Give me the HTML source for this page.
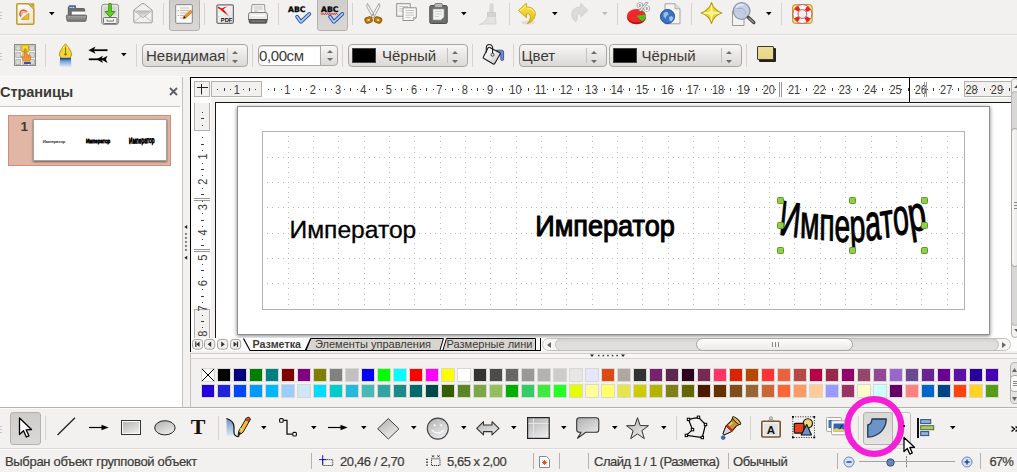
<!DOCTYPE html><html lang="ru"><head><meta charset="utf-8"><title>Draw</title><style>
*{box-sizing:border-box;margin:0;padding:0}
html,body{width:1017px;height:472px;overflow:hidden;background:#f2f1f0;font-family:"Liberation Sans",sans-serif;color:#3c3b37}
.a{position:absolute}
.t{position:absolute;white-space:nowrap;line-height:1}
.sep{position:absolute;width:1px;background:#d6d3cf}
.cb{position:absolute;border:1px solid #aaa7a2;border-radius:4px;background:linear-gradient(#f8f7f6,#e9e7e5 50%,#dcdad7)}
.pressed{position:absolute;border:1px solid #b4b1ad;border-radius:3px;background:linear-gradient(#cfcdca,#dad8d5)}
svg{position:absolute;overflow:visible}
</style></head><body>
<div class="a" style="left:0px;top:12px;width:2px;height:1px;background:#c8c5c0"></div>
<div class="a" style="left:0px;top:15px;width:2px;height:1px;background:#c8c5c0"></div>
<div class="a" style="left:0px;top:18px;width:2px;height:1px;background:#c8c5c0"></div>
<div class="a" style="left:0px;top:34px;width:1017px;height:1px;background:#dbdad8"></div>
<div class="a" style="left:0px;top:35px;width:1017px;height:1px;background:#fbfaf9"></div>
<div class="a" style="left:0px;top:53px;width:2px;height:1px;background:#c8c5c0"></div>
<div class="a" style="left:0px;top:56px;width:2px;height:1px;background:#c8c5c0"></div>
<div class="a" style="left:0px;top:59px;width:2px;height:1px;background:#c8c5c0"></div>
<div class="sep" style="left:163px;top:3px;height:22px;background:#d6d3cf"></div>
<div class="sep" style="left:204px;top:3px;height:22px;background:#d6d3cf"></div>
<div class="sep" style="left:278px;top:3px;height:22px;background:#d6d3cf"></div>
<div class="sep" style="left:352px;top:3px;height:22px;background:#d6d3cf"></div>
<div class="sep" style="left:509px;top:3px;height:22px;background:#d6d3cf"></div>
<div class="sep" style="left:617px;top:3px;height:22px;background:#d6d3cf"></div>
<div class="sep" style="left:691px;top:3px;height:22px;background:#d6d3cf"></div>
<div class="sep" style="left:781px;top:3px;height:22px;background:#d6d3cf"></div>
<div class="pressed" style="left:169px;top:-2px;width:31px;height:33px"></div>
<div class="pressed" style="left:317px;top:-2px;width:31px;height:33px"></div>
<svg style="left:16px;top:2.5px" width="19" height="22" viewBox="0 0 19 22">
<defs><linearGradient id="nd" x1="0" y1="0" x2="1" y2="1"><stop offset="0" stop-color="#ffffff"/><stop offset="1" stop-color="#e4e3e0"/></linearGradient></defs>
<path d="M0.800 1.800q0-1 1-1h10.800l5.200 5.200v14.200q0 1-1 1H1.800q-1 0-1-1z" fill="url(#nd)" stroke="#c19d1e" stroke-width="1.500" stroke-linejoin="round"/>
<path d="M13.300 0.300h5v5z" fill="#c9a21a"/>
<path d="M5.200 13.500A3.600 3.600 0 1 1 10.800 9.200" fill="none" stroke="#d9663a" stroke-width="1.700"/>
<path d="M6.300 12.200A2 2 0 0 1 9.500 9.800" fill="none" stroke="#eda27e" stroke-width="1.200"/>
<path d="M12.800 10.300v6H5.300z" fill="#f0c419" stroke="#c89a10" stroke-width=".9" stroke-linejoin="round"/>
</svg>
<svg style="left:48.8px;top:11.9px" width="6" height="4" viewBox="0 0 6 4"><path d="M0 0h5.600l-2.800 3.300z" fill="#000"/></svg>
<svg style="left:66px;top:5px" width="21" height="17" viewBox="0 0 21 17">
<defs><linearGradient id="ff" x1="0" y1="0" x2="0" y2="1"><stop offset="0" stop-color="#a4a6a4"/><stop offset="1" stop-color="#747674"/></linearGradient></defs>
<path d="M2.300 2h7l1.200 1.600h7.300q.8 0 .8.800v7H2.300z" fill="#6c6e6c" stroke="#555755" stroke-width=".9"/>
<path d="M2.600 0.800q0-.5.500-.5h6.400q.5 0 .5.500v2.600H2.600z" fill="#4a68a8"/>
<rect x="3.600" y="2" width="1" height="1" fill="#fff"/><rect x="5.400" y="2" width="1" height="1" fill="#fff"/><rect x="7.200" y="2" width="1" height="1" fill="#fff"/>
<rect x="5.800" y="6.600" width="13.300" height="3.200" fill="#fdfdfd"/>
<path d="M1 10.200h19q.8 0 .7.800l-.7 4.400q-.1.900-1 .9H2q-.9 0-1-.9L.300 11q-.1-.8.700-.8z" fill="url(#ff)" stroke="#5e605e" stroke-width=".9"/>
</svg>
<svg style="left:100px;top:3px" width="20" height="22" viewBox="0 0 20 22">
<rect x="1.600" y="1.300" width="17" height="20.200" rx="2.500" fill="#e6e6e4" stroke="#8f918e" stroke-width="1"/>
<rect x="3.500" y="3.500" width="13" height="9" fill="#d4d5d2"/>
<rect x="3.500" y="14.500" width="13.500" height="6" rx=".8" fill="#f1f1ef" stroke="#6f716e" stroke-width="1"/>
<path d="M7 16.500v1.600h6.500v-1.600" fill="none" stroke="#6f716e" stroke-width=".9"/>
<path d="M8.700 0.800q1.300-1 2.600 0v7.700h3.700L10 14.300 5 8.500h3.700z" fill="#5cd11e" stroke="#3a9a0e" stroke-width="1" stroke-linejoin="round"/>
</svg>
<svg style="left:133px;top:2.5px" width="21" height="21" viewBox="0 0 21 21">
<defs><linearGradient id="mf" x1="0" y1="0" x2="0" y2="1"><stop offset="0" stop-color="#b4b4b2"/><stop offset="1" stop-color="#e2e2e0"/></linearGradient></defs>
<path d="M0.800 7.200L8.500 1q1.500-1 3 0l7.700 6.200V19q0 .8-.8.800H1.600q-.8 0-.8-.8z" fill="#f0f0ee" stroke="#9c9c9a" stroke-width="1" stroke-linejoin="round"/>
<path d="M2.200 7.400h15.600L10 13.800z" fill="url(#mf)"/>
<path d="M1.200 19l7-6M18.800 19l-7-6" stroke="#b9b9b7" stroke-width=".9" fill="none"/>
<path d="M1 7.500l9 7.200 9-7.200" stroke="#a8a8a6" stroke-width=".9" fill="none"/>
</svg>
<svg style="left:175px;top:4px" width="18" height="20" viewBox="0 0 18 20">
<rect x="0.700" y="0.700" width="16.600" height="18.600" rx=".8" fill="#fbfbfa" stroke="#858482" stroke-width="1"/>
<path d="M5 4h9M5 6.500h9M5 9h6M5 11.500h4M5 14h3" stroke="#b4b3b0" stroke-width=".9"/>
<path d="M2.800 6.500h1M2.800 11.500h1" stroke="#888" stroke-width="1"/>
<path d="M8.300 14.600l.8-2.600 6.500-5.800 1.700 1.900-6.500 5.800z" fill="#f5921e" stroke="#c0640a" stroke-width=".7" stroke-linejoin="round"/>
<path d="M11 8.800l4-3.600" stroke="#ffd28a" stroke-width=".8"/>
<path d="M8.300 14.600l.8-2.600 1.700 1.900z" fill="#111"/>
</svg>
<svg style="left:216px;top:4px" width="18" height="20" viewBox="0 0 18 20">
<defs><linearGradient id="pg" x1="0" y1="0" x2="1" y2="1"><stop offset="0" stop-color="#fff"/><stop offset="1" stop-color="#dcdcdc"/></linearGradient>
<linearGradient id="pr" x1="0" y1="0" x2="1" y2="1"><stop offset="0" stop-color="#e01018"/><stop offset=".55" stop-color="#e01018"/><stop offset="1" stop-color="#e01018" stop-opacity="0"/></linearGradient></defs>
<rect x="0.900" y="0.900" width="16.500" height="18.400" rx="1.200" fill="url(#pg)" stroke="#6f6f6d" stroke-width="1.200"/>
<path d="M1.800 2.600C5 3.500 10 7 13.800 13.200 9 10 5 5.500 1.800 4z" fill="url(#pr)"/>
<path d="M5.500 4.800Q8 2.800 11.500 2.600 8.500 3.800 7 6z" fill="#e01018"/>
<path d="M3 7.300v.8M3 12.300v.8" stroke="#999" stroke-width=".8"/>
<text x="10.600" y="18" font-size="5.400" font-weight="bold" text-anchor="middle" fill="#111" font-family="Liberation Sans, sans-serif" textLength="11.500" lengthAdjust="spacingAndGlyphs">PDF</text>
</svg>
<svg style="left:248px;top:4px" width="20" height="20" viewBox="0 0 20 20">
<path d="M4 0.600h12.500l.8 9H3.200z" fill="#f3f3f2" stroke="#9a9996" stroke-width="1"/>
<path d="M6 3h8.500M6 5h8.500M6 7h4" stroke="#c2c1be" stroke-width=".9"/>
<path d="M2.500 8.500h15q2 0 2 2v5.500h-19v-5.500q0-2 2-2z" fill="#e9e9e7" stroke="#7d7d7a" stroke-width="1"/>
<path d="M3 11.500h14" stroke="#fff" stroke-width="1.600"/>
<path d="M1.200 15.500h17.600v2.500q0 1.200-1.200 1.200H2.400q-1.200 0-1.200-1.200z" fill="#5a5a58" stroke="#4a4a48" stroke-width=".8"/>
<path d="M3 17.200h14" stroke="#8a8a88" stroke-width="1"/>
</svg>
<svg style="left:288px;top:5px" width="23" height="20" viewBox="0 0 23 20"><text x="0" y="6.800" font-size="7.700" font-weight="bold" fill="#000" stroke="#000" stroke-width=".3" font-family="DejaVu Sans, Liberation Sans, sans-serif" textLength="17.300" lengthAdjust="spacingAndGlyphs">ABC</text><path d="M9 11.700l3.900 5.200 8.500-8" stroke="#2552a8" stroke-width="3.600" fill="none" stroke-linecap="round" stroke-linejoin="round"/><path d="M9 11.700l3.900 5.200 8.500-8" stroke="#b4cff2" stroke-width="1.700" fill="none" stroke-linecap="round" stroke-linejoin="round"/></svg>
<svg style="left:321px;top:5px" width="23" height="20" viewBox="0 0 23 20"><text x="0" y="6.800" font-size="7.700" font-weight="bold" fill="#000" stroke="#000" stroke-width=".3" font-family="DejaVu Sans, Liberation Sans, sans-serif" textLength="17.300" lengthAdjust="spacingAndGlyphs">ABC</text><path d="M0 8.300l1.100 1.300 1.100-1.300 1.100 1.300 1.100-1.300 1.100 1.300 1.100-1.300 1.100 1.300 1.100-1.300 1.100 1.300 1.100-1.300 1.100 1.300 1.100-1.300 1.100 1.300 1.100-1.300 1.100 1.300" stroke="#e01010" stroke-width="1" fill="none"/><path d="M9 11.700l3.900 5.200 8.500-8" stroke="#2552a8" stroke-width="3.600" fill="none" stroke-linecap="round" stroke-linejoin="round"/><path d="M9 11.700l3.900 5.200 8.500-8" stroke="#b4cff2" stroke-width="1.700" fill="none" stroke-linecap="round" stroke-linejoin="round"/></svg>
<svg style="left:364px;top:3px" width="19" height="21" viewBox="0 0 19 21">
<path d="M3.500 0.500q-1.300 1.500-.3 4L9 15l2-1.500z" fill="#f4f4f2" stroke="#9a9a98" stroke-width=".9" stroke-linejoin="round"/>
<path d="M15 0.500q1.300 1.500.3 4L9.500 15l-2-1.500z" fill="#f4f4f2" stroke="#9a9a98" stroke-width=".9" stroke-linejoin="round"/>
<circle cx="9.200" cy="11.800" r=".9" fill="#888"/>
<rect x="-3.600" y="-2.900" width="7.200" height="5.800" rx="2.400" fill="#c77c0c" stroke="#8f5600" stroke-width="1" transform="translate(4.600,17) rotate(-20)"/>
<rect x="-3.600" y="-2.900" width="7.200" height="5.800" rx="2.400" fill="#c77c0c" stroke="#8f5600" stroke-width="1" transform="translate(14,17) rotate(20)"/>
<ellipse cx="4.600" cy="17" rx="1.400" ry="1" fill="#f0d9b0" transform="rotate(-20 4.600 17)"/>
<ellipse cx="14" cy="17" rx="1.400" ry="1" fill="#f0d9b0" transform="rotate(20 14 17)"/>
</svg>
<svg style="left:396px;top:3px" width="21" height="18" viewBox="0 0 21 18">
<rect x="0.700" y="0.700" width="13.500" height="12.500" fill="#f5f5f4" stroke="#8e8e8c" stroke-width="1"/>
<path d="M3 3.500h9M3 5.800h9M3 8.100h4" stroke="#bcbbb8" stroke-width=".8"/>
<path d="M7 4.800h13.300v9.700l-3 3H7z" fill="#fbfbfa" stroke="#8e8e8c" stroke-width="1"/>
<path d="M9.500 7.500h8.500M9.500 9.800h8.500M9.500 12.100h8.500M9.500 14.400h5" stroke="#b4b3b0" stroke-width=".8"/>
<path d="M17.300 17.500v-3h3" fill="#ddd" stroke="#8e8e8c" stroke-width=".7"/>
</svg>
<svg style="left:429px;top:3px" width="19" height="21" viewBox="0 0 19 21">
<rect x="0.800" y="2.500" width="17.400" height="18" rx="1.500" fill="#6d6f6c" stroke="#4b4d4a" stroke-width="1"/>
<rect x="5.500" y="0.500" width="8" height="4" rx="1.500" fill="#b9b9b6" stroke="#6d6f6c" stroke-width=".8"/>
<path d="M4 6h11v8l-3 3H4z" fill="#f5f5f4" stroke="#999" stroke-width=".6"/>
<path d="M6 8.500h7M6 11h7M6 13.500h4" stroke="#c5c4c1" stroke-width=".8"/>
</svg>
<svg style="left:460.5px;top:11.8px" width="6" height="4" viewBox="0 0 6 4"><path d="M0 0h5.600l-2.800 3.300z" fill="#000"/></svg>
<svg style="left:479px;top:3px" width="20" height="22" viewBox="0 0 20 22">
<path d="M11 1.500q1.500-2 3 0v8h-3z" fill="#dcdbd8" stroke="#cfcecb" stroke-width=".8"/>
<path d="M8.500 9.500h8v4h-8z" fill="#d4d3d0" stroke="#c9c8c5" stroke-width=".8"/>
<path d="M8.500 13.500h8l.5 7.500H6.500c-2 0-4.500.5-6 .5 4-1.500 7-4 8-8z" fill="#e4e3e0" stroke="#d0cfcc" stroke-width=".8"/>
</svg>
<svg style="left:518px;top:3px" width="19" height="22" viewBox="0 0 19 22">
<defs><linearGradient id="ug" x1="0" y1="0" x2="0" y2="1"><stop offset="0" stop-color="#fbe54a"/><stop offset="1" stop-color="#e4bc10"/></linearGradient></defs>
<ellipse cx="10" cy="19.500" rx="7" ry="2" fill="#000" opacity=".08"/>
<path d="M8.400 0.300L0.400 7.400L8.400 14.700V10.800C11 10.500 13.500 12 12 16C11.300 18 10.500 19.500 9.300 20.700C14 19 17.500 15 17.200 10.300C16.800 6 13 4 8.400 4z" fill="url(#ug)" stroke="#c4a000" stroke-width=".9" stroke-linejoin="round"/>
<path d="M8 2.500L2.300 7.400M9 5.200c4 0 7 2 7.200 5.500" fill="none" stroke="#fff7a8" stroke-width=".9"/>
</svg>
<svg style="left:551.6px;top:11.9px" width="6" height="4" viewBox="0 0 6 4"><path d="M0 0h5.600l-2.800 3.300z" fill="#000"/></svg>
<svg style="left:571px;top:3px" width="18" height="20" viewBox="0 0 18 20">
<path d="M9.800 0.500L16.900 7.400L9.800 13.800V10.300C7.500 10 5.500 11.500 6.200 14.500C6.500 16 5.800 17.500 4.900 18.700C2 16.500 0.600 13.500 0.900 10.300C1.300 6.300 5 4 9.800 4z" fill="#dcdbd8" stroke="#cecdca" stroke-width=".9" stroke-linejoin="round"/>
</svg>
<svg style="left:601.8px;top:11.9px" width="6" height="4" viewBox="0 0 6 4"><path d="M0 0h5.600l-2.800 3.300z" fill="#bdbbb8"/></svg>
<svg style="left:626px;top:2px" width="24" height="23" viewBox="0 0 24 23">
<ellipse cx="10.500" cy="15.500" rx="9.500" ry="6.800" fill="#b70c0c"/>
<ellipse cx="10.500" cy="13.800" rx="9.500" ry="6.800" fill="#ef2929"/>
<path d="M10.500 13.800l9.300-1.200c.5 3-1 5.500-3.500 7z" fill="#46c21a"/>
<text x="11" y="8.800" font-size="10.500" font-weight="bold" fill="#fdfdfd" stroke="#6e6e6c" stroke-width=".9" paint-order="stroke" font-family="Liberation Sans, sans-serif" textLength="12.500" lengthAdjust="spacingAndGlyphs">%</text>
</svg>
<svg style="left:660px;top:3px" width="21" height="22" viewBox="0 0 21 22">
<path d="M5 0.800h10l5 5v15H5z" fill="#f3f3f2" stroke="#a4a3a0" stroke-width="1"/>
<path d="M15 0.800v5h5" fill="#ddd" stroke="#a4a3a0" stroke-width=".8"/>
<circle cx="7.500" cy="13.500" r="7" fill="#3b73c4" stroke="#1f4b8f" stroke-width="1"/>
<path d="M3.500 10.500q2-2.500 4-1.500l1 2.500-2 1.500-1 2.500-2-2zM9 14l3-1 1.500 2-2 3.500-2-1z" fill="#9cc0ee"/>
</svg>
<svg style="left:700px;top:2px" width="23" height="22" viewBox="0 0 23 22">
<path d="M11.500 0.600c1.300 5 4 8 10.300 10.400 -6.300 2-9 5-10.300 10.400 -1.300-5.400-4-8.400-10.300-10.400 6.300-2.400 9-5.400 10.300-10.400z" fill="#f4dc3c" stroke="#b89a00" stroke-width="1.200" stroke-linejoin="round"/>
<path d="M11.500 3.500v15M4 11h15" stroke="#fff9c0" stroke-width="1.300" stroke-linecap="round"/>
<path d="M11.500 6.500c.5 2 1.800 3.500 4 4.500 -2.200.8-3.500 2.200-4 4.500 -.5-2.300-1.800-3.700-4-4.500 2.200-1 3.500-2.500 4-4.500z" fill="#fdf4a0"/>
</svg>
<svg style="left:732px;top:1.5px" width="25" height="24" viewBox="0 0 25 24">
<path d="M0.500 9h8l3.500 3.500V23.500H0.500z" fill="#f3f3f2" stroke="#9c9b98" stroke-width="1"/>
<circle cx="9.600" cy="9" r="8.300" fill="#bccbe0" fill-opacity=".88" stroke="#8d96a2" stroke-width="1.300"/>
<path d="M4.500 6.500h6l3 3v3" fill="none" stroke="#9fb0c8" stroke-width="1"/>
<path d="M4 5.500q3-3.500 7.500-2.500" stroke="#eef3fa" stroke-width="1.300" fill="none"/>
<path d="M16.200 15.300l5.600 5.200" stroke="#4a4a48" stroke-width="3.400" stroke-linecap="round"/>
<path d="M16.800 15.900l4.600 4.300" stroke="#a5a5a3" stroke-width="1.100" stroke-linecap="round" stroke-dasharray="1 1"/>
</svg>
<svg style="left:765.8px;top:11.9px" width="6" height="4" viewBox="0 0 6 4"><path d="M0 0h5.600l-2.800 3.300z" fill="#000"/></svg>
<svg style="left:792px;top:4px" width="21" height="20" viewBox="0 0 21 20">
<rect x="0.600" y="0.600" width="19.600" height="18.800" rx="3.500" fill="#f6e9b0" stroke="#c9a227" stroke-width="1.200"/>
<circle cx="10.400" cy="10" r="9.500" fill="#fafafa" stroke="#b84a4a" stroke-width=".8"/>
<circle cx="10.400" cy="10" r="7" fill="none" stroke="#ee2222" stroke-width="4.600" stroke-dasharray="4 7" stroke-dashoffset="-3.500"/>
<circle cx="10.400" cy="10" r="4.400" fill="#f2f1f0" stroke="#b84a4a" stroke-width=".9"/>
</svg>
<div class="sep" style="left:45px;top:44px;height:23px;background:#d6d3cf"></div>
<div class="sep" style="left:136px;top:44px;height:23px;background:#d6d3cf"></div>
<div class="sep" style="left:252px;top:44px;height:23px;background:#d6d3cf"></div>
<div class="sep" style="left:342px;top:44px;height:23px;background:#d6d3cf"></div>
<div class="sep" style="left:472px;top:44px;height:23px;background:#d6d3cf"></div>
<div class="sep" style="left:513px;top:44px;height:23px;background:#d6d3cf"></div>
<div class="sep" style="left:746px;top:44px;height:23px;background:#d6d3cf"></div>
<svg style="left:14px;top:44px" width="22" height="22" viewBox="0 0 22 22">
<rect x="0.500" y="0.500" width="21" height="21" fill="#f7f7f6" stroke="#8a8a87" stroke-width="1"/>
<rect x="1.8" y="1.8" width="4.800" height="4.800" fill="#d6d9d2" stroke="#a6a8a3" stroke-width=".8"/><rect x="8.7" y="1.8" width="4.800" height="4.800" fill="#d6d9d2" stroke="#a6a8a3" stroke-width=".8"/><rect x="15.6" y="1.8" width="4.800" height="4.800" fill="#d6d9d2" stroke="#a6a8a3" stroke-width=".8"/><rect x="1.8" y="8.7" width="4.800" height="4.800" fill="#d6d9d2" stroke="#a6a8a3" stroke-width=".8"/><rect x="8.7" y="8.7" width="4.800" height="4.800" fill="#d6d9d2" stroke="#a6a8a3" stroke-width=".8"/><rect x="15.6" y="8.7" width="4.800" height="4.800" fill="#d6d9d2" stroke="#a6a8a3" stroke-width=".8"/><rect x="1.8" y="15.6" width="4.800" height="4.800" fill="#d6d9d2" stroke="#a6a8a3" stroke-width=".8"/><rect x="8.7" y="15.6" width="4.800" height="4.800" fill="#d6d9d2" stroke="#a6a8a3" stroke-width=".8"/><rect x="15.6" y="15.6" width="4.800" height="4.800" fill="#d6d9d2" stroke="#a6a8a3" stroke-width=".8"/>
<rect x="7.800" y="1" width="6.600" height="6.600" fill="#f7dc2a" stroke="#c9a400" stroke-width="1"/>
<path d="M10.300 5.200q1-1 1.800 0v5.300l3.800.8q1 .3.900 1.400l-.5 3.300q-.2 1-1.200 1h-4.600q-.8 0-1.200-.7l-1.800-3.300q-.3-1.200 1-.8l1.800 1.300z" fill="#f59a35" stroke="#d2741a" stroke-width=".8" stroke-linejoin="round"/>
<path d="M12.800 11.500v3M14.500 11.800v2.700" stroke="#d2741a" stroke-width=".6"/>
<rect x="10" y="18" width="6.800" height="2" fill="#2f55a4"/>
</svg>
<svg style="left:58px;top:43px" width="15" height="24" viewBox="0 0 15 24">
<defs><linearGradient id="ph" x1="0" y1="0" x2="0" y2="1"><stop offset="0" stop-color="#2f5ea6"/><stop offset=".35" stop-color="#7fa3d8"/><stop offset="1" stop-color="#e6edf7"/></linearGradient></defs>
<path d="M7.500 0.800C5.800 2.500 1.300 8.500 1.300 12L3.500 15.500h8l2.200-3.500C13.700 8.500 9.200 2.500 7.500 0.800z" fill="#f3d437" stroke="#b89600" stroke-width="1"/>
<path d="M5 4.500Q7.500 2.500 10 4.500" stroke="#fff3a0" stroke-width="1" fill="none"/>
<path d="M7.500 3.500v7.500" stroke="#8a7000" stroke-width="1"/><circle cx="7.500" cy="11.300" r="1.200" fill="#8a7000"/>
<path d="M2 15.500h11l.5 8.500h-12z" fill="url(#ph)"/>
<path d="M2 15.500h11" stroke="#1f4a8a" stroke-width="1.400"/>
</svg>
<svg style="left:88px;top:46px" width="20" height="18" viewBox="0 0 20 18">
<path d="M19.500 4.200H5" stroke="#000" stroke-width="1.800"/><path d="M0.500 4.200l7-3.600-1.800 3.600 1.800 3.600z" fill="#000"/>
<path d="M0.800 13.300H17" stroke="#000" stroke-width="1.800"/><path d="M8.500 13.300l6.500-3.600-1.600 3.600 1.600 3.600zM13 13.300l6.500-3.600-1.600 3.600 1.600 3.600z" fill="#000"/>
</svg>
<svg style="left:120.7px;top:52.7px" width="6" height="4" viewBox="0 0 6 4"><path d="M0 0h5.600l-2.800 3.300z" fill="#000"/></svg>
<div class="cb" style="left:142px;top:44px;width:106px;height:23px"></div>
<div class="t" style="left:146px;top:47.5px;font-size:15px;color:#3c3b37">Невидимая</div>
<div class="sep" style="left:227px;top:48px;height:15px;background:#c4c1bc"></div>
<svg style="left:231.5px;top:50.7px" width="6" height="12.2" viewBox="0 0 6 12.2"><path d="M0 3.100l3-3.100 3 3.100zM0 9.100l3 3.100 3-3.100z" fill="#6e6d68"/></svg>
<div class="a" style="left:258px;top:45px;width:63px;height:21px;background:#fff;border:1px solid #aaa7a2;border-radius:4px 0 0 4px;box-shadow:inset 0 1px 1px #dcdad7"></div>
<div class="t" style="left:259px;top:47.5px;font-size:15px;letter-spacing:-0.4px">0,00см</div>
<div class="cb" style="left:320px;top:45px;width:18px;height:21px;border-radius:0 4px 4px 0"></div>
<svg style="left:326.5px;top:50.2px" width="6" height="11" viewBox="0 0 6 11"><path d="M0 3.100l3-3.100 3 3.100zM0 7.900l3 3.100 3-3.100z" fill="#6e6d68"/></svg>
<div class="cb" style="left:348px;top:44px;width:120px;height:23px"></div>
<div class="a" style="left:352px;top:48px;width:24px;height:15px;background:#000;border:1px solid #444"></div>
<div class="t" style="left:382px;top:47.5px;font-size:15px;color:#3c3b37">Чёрный</div>
<div class="sep" style="left:447px;top:48px;height:15px;background:#c4c1bc"></div>
<svg style="left:451.5px;top:50.7px" width="6" height="12.2" viewBox="0 0 6 12.2"><path d="M0 3.100l3-3.100 3 3.100zM0 9.100l3 3.100 3-3.100z" fill="#6e6d68"/></svg>
<svg style="left:482px;top:43px" width="23" height="23" viewBox="0 0 23 23">
<defs><linearGradient id="bk" x1="0" y1="0" x2="1" y2="1"><stop offset="0" stop-color="#ffffff"/><stop offset=".5" stop-color="#ececec"/><stop offset="1" stop-color="#bdbdbd"/></linearGradient></defs>
<path d="M14.500 7.200h5.300q1.800 0 1.800 1.800v7.300q0 1.200-1.400 1.200t-1.400-1.200V10.200H14.500z" fill="#6d90d0" stroke="#2f4f9a" stroke-width=".9"/>
<path d="M6.300 4.600q.7-.6 1.500-.2L17.800 9.700q.9.500.4 1.400L12.600 20.700q-.5.800-1.400.3L1.600 15.300q-.8-.5-.3-1.300z" fill="url(#bk)" stroke="#1c1c1c" stroke-width="1.100" stroke-linejoin="round"/>
<path d="M4.300 9.500V4.800q0-3.300 3-3.300t3.300 3.300v6.500" fill="none" stroke="#1c1c1c" stroke-width="1.100"/>
<circle cx="10.500" cy="11.800" r="1.500" fill="#e8e8e8" stroke="#333" stroke-width=".9"/>
</svg>
<div class="cb" style="left:519px;top:44px;width:88px;height:23px"></div>
<div class="t" style="left:521.5px;top:47.5px;font-size:15px;color:#3c3b37">Цвет</div>
<div class="sep" style="left:586px;top:48px;height:15px;background:#c4c1bc"></div>
<svg style="left:590.5px;top:50.7px" width="6" height="12.2" viewBox="0 0 6 12.2"><path d="M0 3.100l3-3.100 3 3.100zM0 9.100l3 3.100 3-3.100z" fill="#6e6d68"/></svg>
<div class="cb" style="left:609px;top:44px;width:133px;height:23px"></div>
<div class="a" style="left:613px;top:48px;width:24px;height:15px;background:#000;border:1px solid #444"></div>
<div class="t" style="left:641.5px;top:47.5px;font-size:15px;color:#3c3b37">Чёрный</div>
<div class="sep" style="left:721px;top:48px;height:15px;background:#c4c1bc"></div>
<svg style="left:725.5px;top:50.7px" width="6" height="12.2" viewBox="0 0 6 12.2"><path d="M0 3.100l3-3.100 3 3.100zM0 9.100l3 3.100 3-3.100z" fill="#6e6d68"/></svg>
<div class="a" style="left:758.5px;top:47.5px;width:17px;height:14px;background:#222;border-radius:1px"></div>
<div class="a" style="left:757px;top:46px;width:17px;height:14px;background:linear-gradient(#efdc96,#e8d388);border:1px solid #3a3a30;border-radius:1px"></div>
<div class="a" style="left:0px;top:76px;width:183px;height:331px;background:#f7f6f5"></div>
<div class="a" style="left:0px;top:76px;width:1017px;height:1px;background:#fbfaf9"></div>
<div class="t" style="left:0px;top:85px;font-size:14.6px;font-weight:bold;color:#3c3b37;letter-spacing:-0.1px">Страницы</div>
<svg style="left:169px;top:87px" width="9" height="9" viewBox="0 0 9 9"><path d="M1 1l7 7M8 1l-7 7" stroke="#5c6066" stroke-width="1.800"/></svg>
<div class="a" style="left:0px;top:106px;width:180px;height:1px;background:#c9c6c2"></div>
<div class="a" style="left:0px;top:107px;width:182px;height:300px;background:#fff"></div>
<div class="a" style="left:182px;top:77px;width:1px;height:330px;background:#c4c1bd"></div>
<div class="a" style="left:8px;top:115px;width:163px;height:51px;background:#e2b6a5;border:1px solid #cf8f77"></div>
<div class="t" style="left:20.5px;top:119.5px;font-size:13.5px;font-weight:bold;color:#3c3b37">1</div>
<div class="a" style="left:33px;top:119px;width:134px;height:42px;background:#fff;border:1px solid #a3a09d;box-shadow:0 1px 2px rgba(0,0,0,.5)"></div>
<svg style="left:0;top:0" width="200" height="200" viewBox="0 0 200 200" font-family="Liberation Sans, sans-serif"><text x="42.700" y="143.300" font-size="4.400" fill="#222" stroke="#444" stroke-width=".15">Император</text><text x="86" y="143.500" font-size="4.700" fill="#000" stroke="#000" stroke-width=".7" transform="translate(0,143.500) scale(1,1.150) translate(0,-143.500)">Император</text><text x="129" y="143.300" font-size="8.500" fill="#000" stroke="#000" stroke-width=".9" textLength="25.500" lengthAdjust="spacingAndGlyphs" transform="rotate(-2 141 141)">Император</text></svg>
<svg style="left:184px;top:224.5px" width="4" height="36" viewBox="0 0 4 36"><path d="M3.200 0v4L0.300 2zM3.200 30.800v4L0.300 32.800z" fill="#222"/><rect x="1.200" y="8.2" width="1.500" height="1.500" fill="#333"/><rect x="1.200" y="12.2" width="1.500" height="1.500" fill="#333"/><rect x="1.200" y="16.2" width="1.500" height="1.500" fill="#333"/><rect x="1.200" y="20.2" width="1.500" height="1.500" fill="#333"/><rect x="1.200" y="24.2" width="1.500" height="1.500" fill="#333"/></svg>
<div class="a" style="left:190px;top:77px;width:827px;height:274px;background:#fdfdfd"></div>
<div class="a" style="left:190px;top:77px;width:827px;height:1px;background:#000"></div>
<div class="a" style="left:190px;top:77px;width:1px;height:275px;background:#000"></div>
<div class="a" style="left:211px;top:98px;width:800px;height:4px;background:#f2f1f0"></div>
<div class="a" style="left:211px;top:98px;width:4px;height:240px;background:#f2f1f0"></div>
<div class="a" style="left:194px;top:81px;width:16px;height:16px;background:#f2f1f0;border:1px solid #b3b1ae"></div>
<svg style="left:194px;top:81px" width="16" height="16" viewBox="0 0 16 16"><path d="M3 6.500h11M7.500 3v10.500" stroke="#222" stroke-width="1"/></svg>
<div class="a" style="left:211px;top:81px;width:800px;height:16px;background:#fff"></div>
<div class="a" style="left:211px;top:81px;width:51px;height:16px;background:#f2f1f0;border:1px solid #b3b1ae"></div>
<div class="a" style="left:964px;top:81px;width:47px;height:16px;background:#f2f1f0;border:1px solid #b3b1ae;border-right:none"></div>
<svg style="left:0;top:81px" width="1011" height="16" viewBox="0 0 1011 16" font-family="Liberation Sans, sans-serif"><text transform="translate(236.7,12.700) scale(.88,1)" font-size="12.500" text-anchor="middle" fill="#3c3b37">1</text><rect x="243" y="8.0" width="1" height="1" fill="#3c3b37"/><rect x="249" y="7.0" width="1" height="3" fill="#3c3b37"/><rect x="255" y="8.0" width="1" height="1" fill="#3c3b37"/><rect x="217" y="8.0" width="1" height="1" fill="#3c3b37"/><rect x="224" y="7.0" width="1" height="3" fill="#3c3b37"/><rect x="230" y="8.0" width="1" height="1" fill="#3c3b37"/><rect x="268" y="8.0" width="1" height="1" fill="#3c3b37"/><rect x="274" y="7.0" width="1" height="3" fill="#3c3b37"/><rect x="281" y="8.0" width="1" height="1" fill="#3c3b37"/><text transform="translate(287.3,12.700) scale(.88,1)" font-size="12.500" text-anchor="middle" fill="#3c3b37">1</text><rect x="293" y="8.0" width="1" height="1" fill="#3c3b37"/><rect x="300" y="7.0" width="1" height="3" fill="#3c3b37"/><rect x="306" y="8.0" width="1" height="1" fill="#3c3b37"/><text transform="translate(312.7,12.700) scale(.88,1)" font-size="12.500" text-anchor="middle" fill="#3c3b37">2</text><rect x="319" y="8.0" width="1" height="1" fill="#3c3b37"/><rect x="325" y="7.0" width="1" height="3" fill="#3c3b37"/><rect x="331" y="8.0" width="1" height="1" fill="#3c3b37"/><text transform="translate(338.0,12.700) scale(.88,1)" font-size="12.500" text-anchor="middle" fill="#3c3b37">3</text><rect x="344" y="8.0" width="1" height="1" fill="#3c3b37"/><rect x="350" y="7.0" width="1" height="3" fill="#3c3b37"/><rect x="357" y="8.0" width="1" height="1" fill="#3c3b37"/><text transform="translate(363.4,12.700) scale(.88,1)" font-size="12.500" text-anchor="middle" fill="#3c3b37">4</text><rect x="369" y="8.0" width="1" height="1" fill="#3c3b37"/><rect x="376" y="7.0" width="1" height="3" fill="#3c3b37"/><rect x="382" y="8.0" width="1" height="1" fill="#3c3b37"/><text transform="translate(388.7,12.700) scale(.88,1)" font-size="12.500" text-anchor="middle" fill="#3c3b37">5</text><rect x="395" y="8.0" width="1" height="1" fill="#3c3b37"/><rect x="401" y="7.0" width="1" height="3" fill="#3c3b37"/><rect x="407" y="8.0" width="1" height="1" fill="#3c3b37"/><text transform="translate(414.0,12.700) scale(.88,1)" font-size="12.500" text-anchor="middle" fill="#3c3b37">6</text><rect x="420" y="8.0" width="1" height="1" fill="#3c3b37"/><rect x="426" y="7.0" width="1" height="3" fill="#3c3b37"/><rect x="433" y="8.0" width="1" height="1" fill="#3c3b37"/><text transform="translate(439.4,12.700) scale(.88,1)" font-size="12.500" text-anchor="middle" fill="#3c3b37">7</text><rect x="445" y="8.0" width="1" height="1" fill="#3c3b37"/><rect x="452" y="7.0" width="1" height="3" fill="#3c3b37"/><rect x="458" y="8.0" width="1" height="1" fill="#3c3b37"/><text transform="translate(464.7,12.700) scale(.88,1)" font-size="12.500" text-anchor="middle" fill="#3c3b37">8</text><rect x="471" y="8.0" width="1" height="1" fill="#3c3b37"/><rect x="477" y="7.0" width="1" height="3" fill="#3c3b37"/><rect x="483" y="8.0" width="1" height="1" fill="#3c3b37"/><text transform="translate(490.1,12.700) scale(.88,1)" font-size="12.500" text-anchor="middle" fill="#3c3b37">9</text><rect x="496" y="8.0" width="1" height="1" fill="#3c3b37"/><rect x="502" y="7.0" width="1" height="3" fill="#3c3b37"/><rect x="509" y="8.0" width="1" height="1" fill="#3c3b37"/><text transform="translate(515.4,12.700) scale(.88,1)" font-size="12.500" text-anchor="middle" fill="#3c3b37">10</text><rect x="521" y="8.0" width="1" height="1" fill="#3c3b37"/><rect x="528" y="7.0" width="1" height="3" fill="#3c3b37"/><rect x="534" y="8.0" width="1" height="1" fill="#3c3b37"/><text transform="translate(540.7,12.700) scale(.88,1)" font-size="12.500" text-anchor="middle" fill="#3c3b37">11</text><rect x="547" y="8.0" width="1" height="1" fill="#3c3b37"/><rect x="553" y="7.0" width="1" height="3" fill="#3c3b37"/><rect x="559" y="8.0" width="1" height="1" fill="#3c3b37"/><text transform="translate(566.1,12.700) scale(.88,1)" font-size="12.500" text-anchor="middle" fill="#3c3b37">12</text><rect x="572" y="8.0" width="1" height="1" fill="#3c3b37"/><rect x="578" y="7.0" width="1" height="3" fill="#3c3b37"/><rect x="585" y="8.0" width="1" height="1" fill="#3c3b37"/><text transform="translate(591.4,12.700) scale(.88,1)" font-size="12.500" text-anchor="middle" fill="#3c3b37">13</text><rect x="597" y="8.0" width="1" height="1" fill="#3c3b37"/><rect x="604" y="7.0" width="1" height="3" fill="#3c3b37"/><rect x="610" y="8.0" width="1" height="1" fill="#3c3b37"/><text transform="translate(616.8,12.700) scale(.88,1)" font-size="12.500" text-anchor="middle" fill="#3c3b37">14</text><rect x="623" y="8.0" width="1" height="1" fill="#3c3b37"/><rect x="629" y="7.0" width="1" height="3" fill="#3c3b37"/><rect x="635" y="8.0" width="1" height="1" fill="#3c3b37"/><text transform="translate(642.1,12.700) scale(.88,1)" font-size="12.500" text-anchor="middle" fill="#3c3b37">15</text><rect x="648" y="8.0" width="1" height="1" fill="#3c3b37"/><rect x="654" y="7.0" width="1" height="3" fill="#3c3b37"/><rect x="661" y="8.0" width="1" height="1" fill="#3c3b37"/><text transform="translate(667.4,12.700) scale(.88,1)" font-size="12.500" text-anchor="middle" fill="#3c3b37">16</text><rect x="673" y="8.0" width="1" height="1" fill="#3c3b37"/><rect x="680" y="7.0" width="1" height="3" fill="#3c3b37"/><rect x="686" y="8.0" width="1" height="1" fill="#3c3b37"/><text transform="translate(692.8,12.700) scale(.88,1)" font-size="12.500" text-anchor="middle" fill="#3c3b37">17</text><rect x="699" y="8.0" width="1" height="1" fill="#3c3b37"/><rect x="705" y="7.0" width="1" height="3" fill="#3c3b37"/><rect x="711" y="8.0" width="1" height="1" fill="#3c3b37"/><text transform="translate(718.1,12.700) scale(.88,1)" font-size="12.500" text-anchor="middle" fill="#3c3b37">18</text><rect x="724" y="8.0" width="1" height="1" fill="#3c3b37"/><rect x="730" y="7.0" width="1" height="3" fill="#3c3b37"/><rect x="737" y="8.0" width="1" height="1" fill="#3c3b37"/><text transform="translate(743.5,12.700) scale(.88,1)" font-size="12.500" text-anchor="middle" fill="#3c3b37">19</text><rect x="749" y="8.0" width="1" height="1" fill="#3c3b37"/><rect x="756" y="7.0" width="1" height="3" fill="#3c3b37"/><rect x="762" y="8.0" width="1" height="1" fill="#3c3b37"/><text transform="translate(768.8,12.700) scale(.88,1)" font-size="12.500" text-anchor="middle" fill="#3c3b37">20</text><rect x="775" y="8.0" width="1" height="1" fill="#3c3b37"/><rect x="781" y="7.0" width="1" height="3" fill="#3c3b37"/><rect x="787" y="8.0" width="1" height="1" fill="#3c3b37"/><text transform="translate(794.1,12.700) scale(.88,1)" font-size="12.500" text-anchor="middle" fill="#3c3b37">21</text><rect x="800" y="8.0" width="1" height="1" fill="#3c3b37"/><rect x="806" y="7.0" width="1" height="3" fill="#3c3b37"/><rect x="813" y="8.0" width="1" height="1" fill="#3c3b37"/><text transform="translate(819.5,12.700) scale(.88,1)" font-size="12.500" text-anchor="middle" fill="#3c3b37">22</text><rect x="825" y="8.0" width="1" height="1" fill="#3c3b37"/><rect x="832" y="7.0" width="1" height="3" fill="#3c3b37"/><rect x="838" y="8.0" width="1" height="1" fill="#3c3b37"/><text transform="translate(844.8,12.700) scale(.88,1)" font-size="12.500" text-anchor="middle" fill="#3c3b37">23</text><rect x="851" y="8.0" width="1" height="1" fill="#3c3b37"/><rect x="857" y="7.0" width="1" height="3" fill="#3c3b37"/><rect x="863" y="8.0" width="1" height="1" fill="#3c3b37"/><text transform="translate(870.2,12.700) scale(.88,1)" font-size="12.500" text-anchor="middle" fill="#3c3b37">24</text><rect x="876" y="8.0" width="1" height="1" fill="#3c3b37"/><rect x="882" y="7.0" width="1" height="3" fill="#3c3b37"/><rect x="889" y="8.0" width="1" height="1" fill="#3c3b37"/><text transform="translate(895.5,12.700) scale(.88,1)" font-size="12.500" text-anchor="middle" fill="#3c3b37">25</text><rect x="901" y="8.0" width="1" height="1" fill="#3c3b37"/><rect x="908" y="7.0" width="1" height="3" fill="#3c3b37"/><rect x="914" y="8.0" width="1" height="1" fill="#3c3b37"/><text transform="translate(920.8,12.700) scale(.88,1)" font-size="12.500" text-anchor="middle" fill="#3c3b37">26</text><rect x="927" y="8.0" width="1" height="1" fill="#3c3b37"/><rect x="933" y="7.0" width="1" height="3" fill="#3c3b37"/><rect x="939" y="8.0" width="1" height="1" fill="#3c3b37"/><text transform="translate(946.2,12.700) scale(.88,1)" font-size="12.500" text-anchor="middle" fill="#3c3b37">27</text><rect x="952" y="8.0" width="1" height="1" fill="#3c3b37"/><rect x="958" y="7.0" width="1" height="3" fill="#3c3b37"/><rect x="965" y="8.0" width="1" height="1" fill="#3c3b37"/><text transform="translate(971.5,12.700) scale(.88,1)" font-size="12.500" text-anchor="middle" fill="#3c3b37">28</text><rect x="977" y="8.0" width="1" height="1" fill="#3c3b37"/><rect x="984" y="7.0" width="1" height="3" fill="#3c3b37"/><rect x="990" y="8.0" width="1" height="1" fill="#3c3b37"/><text transform="translate(996.9,12.700) scale(.88,1)" font-size="12.500" text-anchor="middle" fill="#3c3b37">29</text><rect x="1003" y="8.0" width="1" height="1" fill="#3c3b37"/><rect x="1009" y="7.0" width="1" height="3" fill="#3c3b37"/></svg>
<div class="a" style="left:779px;top:82px;width:1px;height:15px;background:#9a9895"></div>
<div class="a" style="left:781px;top:82px;width:1px;height:15px;background:#9a9895"></div>
<div class="a" style="left:924px;top:82px;width:1px;height:15px;background:#9a9895"></div>
<div class="a" style="left:926px;top:82px;width:1px;height:15px;background:#9a9895"></div>
<div class="a" style="left:909px;top:78px;width:1px;height:24px;background:#000"></div>
<div class="a" style="left:194px;top:103px;width:16px;height:235px;background:#fff"></div>
<div class="a" style="left:194px;top:103px;width:16px;height:28px;background:#f2f1f0;border:1px solid #b3b1ae;border-top:none"></div>
<div class="a" style="left:194px;top:309px;width:16px;height:29px;background:#f2f1f0;border:1px solid #b3b1ae;border-bottom:none"></div>
<svg style="left:194px;top:0" width="16" height="338" viewBox="0 0 16 338" font-family="Liberation Sans, sans-serif"><defs><clipPath id="vc"><rect x="0" y="103" width="16" height="235"/></clipPath></defs><g clip-path="url(#vc)"><rect y="112" x="8.0" height="1" width="1" fill="#3c3b37"/><rect y="118" x="7.0" height="1" width="3" fill="#3c3b37"/><rect y="125" x="8.0" height="1" width="1" fill="#3c3b37"/><rect y="137" x="8.0" height="1" width="1" fill="#3c3b37"/><rect y="144" x="7.0" height="1" width="3" fill="#3c3b37"/><rect y="150" x="8.0" height="1" width="1" fill="#3c3b37"/><text transform="translate(13,156.4) rotate(-90) scale(.88,1)" font-size="12.500" text-anchor="middle" fill="#3c3b37">1</text><rect y="163" x="8.0" height="1" width="1" fill="#3c3b37"/><rect y="169" x="7.0" height="1" width="3" fill="#3c3b37"/><rect y="175" x="8.0" height="1" width="1" fill="#3c3b37"/><text transform="translate(13,181.8) rotate(-90) scale(.88,1)" font-size="12.500" text-anchor="middle" fill="#3c3b37">2</text><rect y="188" x="8.0" height="1" width="1" fill="#3c3b37"/><rect y="194" x="7.0" height="1" width="3" fill="#3c3b37"/><rect y="201" x="8.0" height="1" width="1" fill="#3c3b37"/><text transform="translate(13,207.1) rotate(-90) scale(.88,1)" font-size="12.500" text-anchor="middle" fill="#3c3b37">3</text><rect y="213" x="8.0" height="1" width="1" fill="#3c3b37"/><rect y="220" x="7.0" height="1" width="3" fill="#3c3b37"/><rect y="226" x="8.0" height="1" width="1" fill="#3c3b37"/><text transform="translate(13,232.5) rotate(-90) scale(.88,1)" font-size="12.500" text-anchor="middle" fill="#3c3b37">4</text><rect y="239" x="8.0" height="1" width="1" fill="#3c3b37"/><rect y="245" x="7.0" height="1" width="3" fill="#3c3b37"/><rect y="251" x="8.0" height="1" width="1" fill="#3c3b37"/><text transform="translate(13,257.8) rotate(-90) scale(.88,1)" font-size="12.500" text-anchor="middle" fill="#3c3b37">5</text><rect y="264" x="8.0" height="1" width="1" fill="#3c3b37"/><rect y="270" x="7.0" height="1" width="3" fill="#3c3b37"/><rect y="277" x="8.0" height="1" width="1" fill="#3c3b37"/><text transform="translate(13,283.1) rotate(-90) scale(.88,1)" font-size="12.500" text-anchor="middle" fill="#3c3b37">6</text><rect y="289" x="8.0" height="1" width="1" fill="#3c3b37"/><rect y="296" x="7.0" height="1" width="3" fill="#3c3b37"/><rect y="302" x="8.0" height="1" width="1" fill="#3c3b37"/><text transform="translate(13,308.5) rotate(-90) scale(.88,1)" font-size="12.500" text-anchor="middle" fill="#3c3b37">7</text><rect y="315" x="8.0" height="1" width="1" fill="#3c3b37"/><rect y="321" x="7.0" height="1" width="3" fill="#3c3b37"/><rect y="327" x="8.0" height="1" width="1" fill="#3c3b37"/><text transform="translate(13,333.8) rotate(-90) scale(.88,1)" font-size="12.500" text-anchor="middle" fill="#3c3b37">8</text></g></svg>
<div class="a" style="left:194px;top:198px;width:16px;height:1px;background:#9a9895"></div>
<div class="a" style="left:194px;top:200px;width:16px;height:1px;background:#9a9895"></div>
<div class="a" style="left:194px;top:249px;width:16px;height:1px;background:#9a9895"></div>
<div class="a" style="left:194px;top:251px;width:16px;height:1px;background:#9a9895"></div>
<div class="a" style="left:215px;top:102px;width:796px;height:236px;background:#fff;border-left:1px solid #1a1a1a;border-top:1px solid #1a1a1a"></div>
<div class="a" style="left:237px;top:106px;width:753px;height:229px;background:#fff;border:1px solid #8e8e8e;box-shadow:0 1px 4px rgba(0,0,0,.5)"></div>
<style>.gh{stroke-dasharray:1 4 1 5 1 4 1 4 1 4 1 4 1 4 1 4 1 4 1 4 1 4 1 4 1 4 1 4 1 4 1 5 1 4 1 4 1 4 1 4 1 4 1 4 1 4 1 4 1 4 1 4 1 4 1 4 1 4 1 4 1 5 1 4 1 4 1 4 1 4 1 4 1 4 1 4 1 4 1 4 1 4 1 4 1 4 1 4 1 4 1 5 1 4 1 4 1 4 1 4 1 4 1 4 1 4 1 4 1 4 1 4 1 4 1 4 1 4 1 4 1 5 1 4 1 4 1 4 1 4 1 4 1 4 1 4 1 4 1 4 1 4 1 4 1 4 1 4 1 5 1 4 1 4 1 4 1 4 1 4 1 4 1 4 1 4 1 4 1 4 1 4 1 4 1 4 1 4 1 5 1 4 1 4 1 4 1 4 1 4 1 4 1 4 1 4 1 4 1 4 1 4 1 4 1 4 1 4 1 5 1 4 1 4 1 4 1 4 1 4 1 4 1 4 1 4 1 4 1 4 1 4 1 4 1 4 1 5 1 4 1 4 1 4 1 4 1 4 1 4 1 4 1 4 1 4 1 4 1 4 1 4 1 4 1 4 1 5 1 4 1 4 1 4 1 999}.gv{stroke-dasharray:1 4 1 5 1 4 1 4 1 4 1 4 1 4 1 4 1 4 1 4 1 4 1 4 1 4 1 4 1 4 1 4 1 5 1 4 1 4 1 4 1 4 1 4 1 4 1 4 1 4 1 4 1 4 1 4 1 4 1 4 1 5 1 4 1 4 1 999}</style>
<svg style="left:0;top:0" width="1017" height="472" viewBox="0 0 1017 472"><g stroke="#b9b9b9" stroke-width="1" fill="none"><path class="gh" d="M267 157.5H964"/><path class="gh" d="M267 182.5H964"/><path class="gh" d="M267 207.5H964"/><path class="gh" d="M267 233.5H964"/><path class="gh" d="M267 258.5H964"/><path class="gh" d="M267 283.5H964"/><path class="gv" d="M288.5 136V309"/><path class="gv" d="M313.5 136V309"/><path class="gv" d="M338.5 136V309"/><path class="gv" d="M364.5 136V309"/><path class="gv" d="M389.5 136V309"/><path class="gv" d="M414.5 136V309"/><path class="gv" d="M440.5 136V309"/><path class="gv" d="M465.5 136V309"/><path class="gv" d="M490.5 136V309"/><path class="gv" d="M516.5 136V309"/><path class="gv" d="M541.5 136V309"/><path class="gv" d="M566.5 136V309"/><path class="gv" d="M592.5 136V309"/><path class="gv" d="M617.5 136V309"/><path class="gv" d="M642.5 136V309"/><path class="gv" d="M668.5 136V309"/><path class="gv" d="M693.5 136V309"/><path class="gv" d="M718.5 136V309"/><path class="gv" d="M744.5 136V309"/><path class="gv" d="M769.5 136V309"/><path class="gv" d="M794.5 136V309"/><path class="gv" d="M820.5 136V309"/><path class="gv" d="M845.5 136V309"/><path class="gv" d="M871.5 136V309"/><path class="gv" d="M896.5 136V309"/><path class="gv" d="M921.5 136V309"/><path class="gv" d="M947.5 136V309"/></g><rect x="262.500" y="131.500" width="702" height="178" fill="none" stroke="#b2b2b2" stroke-width="1"/></svg>
<svg style="left:0;top:0" width="1017" height="472" viewBox="0 0 1017 472" font-family="Liberation Sans, sans-serif">
<text x="289.500" y="237.600" font-size="24.600" fill="#000" stroke="#000" stroke-width=".300">Император</text>
<text x="535.200" y="236.400" font-size="27.100" fill="#000" stroke="#000" stroke-width="1.000" stroke-linejoin="round" transform="translate(0,236.400) scale(1,1.1) translate(0,-236.400)">Император</text>
<text transform="matrix(0.610 0.102 -0.100 1.040 778.3 234.2)" font-size="47" fill="#000" stroke="#000" stroke-width="1.000" stroke-linejoin="round">И</text>
<text transform="matrix(0.600 0.058 -0.026 1.000 799.8 237.6)" font-size="47" fill="#000" stroke="#000" stroke-width="1.000" stroke-linejoin="round">м</text>
<text transform="matrix(0.600 0.052 -0.009 1.000 819.2 239.6)" font-size="47" fill="#000" stroke="#000" stroke-width="1.000" stroke-linejoin="round">п</text>
<text transform="matrix(0.600 0.021 -0.000 1.000 834.5 241.5)" font-size="47" fill="#000" stroke="#000" stroke-width="1.000" stroke-linejoin="round">е</text>
<text transform="matrix(0.600 -0.021 0.044 1.000 850.2 242.0)" font-size="47" fill="#000" stroke="#000" stroke-width="1.000" stroke-linejoin="round">р</text>
<text transform="matrix(0.600 -0.074 0.066 1.080 865.9 240.8)" font-size="47" fill="#000" stroke="#000" stroke-width="1.000" stroke-linejoin="round">а</text>
<text transform="matrix(0.600 -0.106 0.083 1.050 881.6 238.6)" font-size="47" fill="#000" stroke="#000" stroke-width="1.000" stroke-linejoin="round">т</text>
<text transform="matrix(0.600 -0.128 0.114 1.080 894.5 236.0)" font-size="47" fill="#000" stroke="#000" stroke-width="1.000" stroke-linejoin="round">о</text>
<text transform="matrix(0.670 -0.142 0.152 1.040 910.2 232.6)" font-size="47" fill="#000" stroke="#000" stroke-width="1.000" stroke-linejoin="round">р</text>
<rect x="777.5" y="197.5" width="6" height="6" rx="1" fill="#94cc52" stroke="#5c9c1a" stroke-width="1"/>
<rect x="777.5" y="222.5" width="6" height="6" rx="1" fill="#94cc52" stroke="#5c9c1a" stroke-width="1"/>
<rect x="777.5" y="247.5" width="6" height="6" rx="1" fill="#94cc52" stroke="#5c9c1a" stroke-width="1"/>
<rect x="849.5" y="197.5" width="6" height="6" rx="1" fill="#94cc52" stroke="#5c9c1a" stroke-width="1"/>
<rect x="849.5" y="247.5" width="6" height="6" rx="1" fill="#94cc52" stroke="#5c9c1a" stroke-width="1"/>
<rect x="921.5" y="197.5" width="6" height="6" rx="1" fill="#94cc52" stroke="#5c9c1a" stroke-width="1"/>
<rect x="921.5" y="222.5" width="6" height="6" rx="1" fill="#94cc52" stroke="#5c9c1a" stroke-width="1"/>
<rect x="921.5" y="247.5" width="6" height="6" rx="1" fill="#94cc52" stroke="#5c9c1a" stroke-width="1"/>
</svg>
<div class="a" style="left:1011px;top:78px;width:8px;height:260px;background:#f3f2f1;border:1px solid #b3b0ac;border-radius:5px"></div>
<div class="a" style="left:1011px;top:91px;width:8px;height:235px;background:#d9d7d4;border:1px solid #b9b6b2;border-radius:5px"></div>
<div class="a" style="left:1011px;top:128px;width:8px;height:139px;background:linear-gradient(90deg,#f9f9f8,#e9e7e5);border:1px solid #a9a6a2;border-radius:5px"></div>
<svg style="left:1013.5px;top:84.5px" width="6" height="3" viewBox="0 0 6 3"><path d="M0 3l3-3 3 3z" fill="#555"/></svg>
<svg style="left:1013.5px;top:329px" width="6" height="3" viewBox="0 0 6 3"><path d="M0 0l3 3 3-3z" fill="#555"/></svg>
<div class="a" style="left:1014px;top:202px;width:4px;height:1px;background:#8a8885"></div>
<div class="a" style="left:1014px;top:205px;width:4px;height:1px;background:#8a8885"></div>
<div class="a" style="left:1014px;top:208px;width:4px;height:1px;background:#8a8885"></div>
<div class="a" style="left:191px;top:338px;width:820px;height:13px;background:#fff"></div>
<svg style="left:191.5px;top:339.3px" width="11.2" height="10.6" viewBox="0 0 11.2 10.6"><rect x="0.500" y="0.400" width="10.200" height="9.800" rx="3" fill="#f1f0ef" stroke="#a3a19e" stroke-width="1"/><path d="M7.600 2.500v5.600L4.200 5.300z" fill="#333"/><path d="M3.800 2.500v5.600" stroke="#333" stroke-width="1.200"/></svg>
<svg style="left:204.45px;top:339.3px" width="11.2" height="10.6" viewBox="0 0 11.2 10.6"><rect x="0.500" y="0.400" width="10.200" height="9.800" rx="3" fill="#f1f0ef" stroke="#a3a19e" stroke-width="1"/><path d="M7.200 2.500v5.600L3.600 5.300z" fill="#333"/></svg>
<svg style="left:217.4px;top:339.3px" width="11.2" height="10.6" viewBox="0 0 11.2 10.6"><rect x="0.500" y="0.400" width="10.200" height="9.800" rx="3" fill="#f1f0ef" stroke="#a3a19e" stroke-width="1"/><path d="M4.200 2.500v5.600L7.800 5.300z" fill="#333"/></svg>
<svg style="left:230.35px;top:339.3px" width="11.2" height="10.6" viewBox="0 0 11.2 10.6"><rect x="0.500" y="0.400" width="10.200" height="9.800" rx="3" fill="#f1f0ef" stroke="#a3a19e" stroke-width="1"/><path d="M3.600 2.500v5.600L7 5.300z" fill="#333"/><path d="M7.500 2.500v5.600" stroke="#333" stroke-width="1.200"/></svg>
<svg style="left:0;top:0" width="1017" height="472" viewBox="0 0 1017 472" font-family="Liberation Sans, sans-serif">
<path d="M310.700 338.500H443.500L439.800 350.500H306z" fill="#d8d4cf" stroke="#000" stroke-width="1"/>
<path d="M446.500 338.500H535.500V350.500H442.800z" fill="#d8d4cf" stroke="#000" stroke-width="1"/>
<path d="M250 350.500H540" stroke="#000" stroke-width="1"/>
<path d="M243.500 338.500L250 350.500H305.300L310.700 338.500" fill="#fff" stroke="#000" stroke-width="1.200"/>
<path d="M540.500 338v13" stroke="#000" stroke-width="1"/>
<text x="252.500" y="348" font-size="11" font-weight="bold" fill="#3c3b37" textLength="48.500" lengthAdjust="spacingAndGlyphs">Разметка</text>
<text x="315" y="348" font-size="11" fill="#3c3b37" textLength="116" lengthAdjust="spacingAndGlyphs">Элементы управления</text>
<text x="446.500" y="348" font-size="11" fill="#3c3b37" textLength="86" lengthAdjust="spacingAndGlyphs">Размерные лини</text>
</svg>
<div class="a" style="left:542px;top:338px;width:469px;height:13px;background:#f6f5f4;border:1px solid #c3c0bc;border-radius:6.500px"></div>
<div class="a" style="left:555px;top:338px;width:444px;height:13px;background:linear-gradient(#d3d1ce,#dfddda 30%,#e2e0dd);border:1px solid #c3c0bc;border-radius:6.500px"></div>
<svg style="left:547px;top:342px" width="4" height="6" viewBox="0 0 4 6"><path d="M4 0v6L0 3z" fill="#666"/></svg>
<svg style="left:1002px;top:342px" width="4" height="6" viewBox="0 0 4 6"><path d="M0 0v6L4 3z" fill="#666"/></svg>
<div class="a" style="left:696px;top:338px;width:157px;height:13px;background:linear-gradient(#fdfdfc,#eceae8);border:1px solid #a9a6a2;border-radius:6.500px"></div>
<div class="a" style="left:772px;top:342px;width:1px;height:5px;background:#888"></div>
<div class="a" style="left:775px;top:342px;width:1px;height:5px;background:#888"></div>
<div class="a" style="left:778px;top:342px;width:1px;height:5px;background:#888"></div>
<div class="a" style="left:190px;top:352px;width:827px;height:55px;background:#f2f1f0"></div>
<div class="a" style="left:190px;top:353px;width:827px;height:1px;background:#cfccc8"></div>
<div class="a" style="left:190px;top:353px;width:1px;height:54px;background:#c4c1bd"></div>
<div class="a" style="left:190px;top:358px;width:827px;height:1px;background:#d9d6d2"></div>
<div class="a" style="left:191px;top:354px;width:826px;height:4px;background:#f7f6f5"></div>
<svg style="left:590px;top:353.5px" width="34" height="4" viewBox="0 0 34 4"><path d="M0 0.500h4l-2 2.500zM31 0.500h4l-2 2.500z" fill="#222"/><rect x="8.0" y="0.800" width="1.500" height="1.500" fill="#333"/><rect x="12.6" y="0.800" width="1.500" height="1.500" fill="#333"/><rect x="17.2" y="0.800" width="1.500" height="1.500" fill="#333"/><rect x="21.8" y="0.800" width="1.500" height="1.500" fill="#333"/><rect x="26.4" y="0.800" width="1.500" height="1.500" fill="#333"/></svg>
<svg style="left:0;top:0" width="1017" height="472" viewBox="0 0 1017 472"><rect x="201.5" y="368.500" width="13" height="13" fill="#fff" stroke="#dad8d5"/><path d="M202.0 369l12 12M214.0 369l-12 12" stroke="#000" stroke-width="1"/><rect x="217.5" y="368.500" width="13" height="13" fill="#000000" stroke="#dad8d5"/><rect x="233.5" y="368.500" width="13" height="13" fill="#000080" stroke="#dad8d5"/><rect x="249.5" y="368.500" width="13" height="13" fill="#008000" stroke="#dad8d5"/><rect x="265.5" y="368.500" width="13" height="13" fill="#008080" stroke="#dad8d5"/><rect x="281.5" y="368.500" width="13" height="13" fill="#800000" stroke="#dad8d5"/><rect x="297.5" y="368.500" width="13" height="13" fill="#800080" stroke="#dad8d5"/><rect x="313.5" y="368.500" width="13" height="13" fill="#808000" stroke="#dad8d5"/><rect x="329.5" y="368.500" width="13" height="13" fill="#808080" stroke="#dad8d5"/><rect x="345.5" y="368.500" width="13" height="13" fill="#c0c0c0" stroke="#dad8d5"/><rect x="361.5" y="368.500" width="13" height="13" fill="#0000ff" stroke="#dad8d5"/><rect x="377.5" y="368.500" width="13" height="13" fill="#00ff00" stroke="#dad8d5"/><rect x="393.5" y="368.500" width="13" height="13" fill="#00ffff" stroke="#dad8d5"/><rect x="409.5" y="368.500" width="13" height="13" fill="#ff0000" stroke="#dad8d5"/><rect x="425.5" y="368.500" width="13" height="13" fill="#ff00ff" stroke="#dad8d5"/><rect x="441.5" y="368.500" width="13" height="13" fill="#ffff00" stroke="#dad8d5"/><rect x="457.5" y="368.500" width="13" height="13" fill="#ffffff" stroke="#dad8d5"/><rect x="473.5" y="368.500" width="13" height="13" fill="#333333" stroke="#dad8d5"/><rect x="489.5" y="368.500" width="13" height="13" fill="#4c4c4c" stroke="#dad8d5"/><rect x="505.5" y="368.500" width="13" height="13" fill="#666666" stroke="#dad8d5"/><rect x="521.5" y="368.500" width="13" height="13" fill="#999999" stroke="#dad8d5"/><rect x="537.5" y="368.500" width="13" height="13" fill="#b3b3b3" stroke="#dad8d5"/><rect x="553.5" y="368.500" width="13" height="13" fill="#cccccc" stroke="#dad8d5"/><rect x="569.5" y="368.500" width="13" height="13" fill="#e6e6e6" stroke="#dad8d5"/><rect x="585.5" y="368.500" width="13" height="13" fill="#e6e6ff" stroke="#dad8d5"/><rect x="601.5" y="368.500" width="13" height="13" fill="#dd4814" stroke="#dad8d5"/><rect x="617.5" y="368.500" width="13" height="13" fill="#aea79f" stroke="#dad8d5"/><rect x="633.5" y="368.500" width="13" height="13" fill="#333333" stroke="#dad8d5"/><rect x="649.5" y="368.500" width="13" height="13" fill="#77216f" stroke="#dad8d5"/><rect x="665.5" y="368.500" width="13" height="13" fill="#5e2750" stroke="#dad8d5"/><rect x="681.5" y="368.500" width="13" height="13" fill="#2c001e" stroke="#dad8d5"/><rect x="697.5" y="368.500" width="13" height="13" fill="#772953" stroke="#dad8d5"/><rect x="713.5" y="368.500" width="13" height="13" fill="#ff3366" stroke="#dad8d5"/><rect x="729.5" y="368.500" width="13" height="13" fill="#dc2300" stroke="#dad8d5"/><rect x="745.5" y="368.500" width="13" height="13" fill="#b84700" stroke="#dad8d5"/><rect x="761.5" y="368.500" width="13" height="13" fill="#ff3333" stroke="#dad8d5"/><rect x="777.5" y="368.500" width="13" height="13" fill="#eb613d" stroke="#dad8d5"/><rect x="793.5" y="368.500" width="13" height="13" fill="#b84747" stroke="#dad8d5"/><rect x="809.5" y="368.500" width="13" height="13" fill="#b80047" stroke="#dad8d5"/><rect x="825.5" y="368.500" width="13" height="13" fill="#99284c" stroke="#dad8d5"/><rect x="841.5" y="368.500" width="13" height="13" fill="#94006b" stroke="#dad8d5"/><rect x="857.5" y="368.500" width="13" height="13" fill="#94476b" stroke="#dad8d5"/><rect x="873.5" y="368.500" width="13" height="13" fill="#944794" stroke="#dad8d5"/><rect x="889.5" y="368.500" width="13" height="13" fill="#9966cc" stroke="#dad8d5"/><rect x="905.5" y="368.500" width="13" height="13" fill="#6b4794" stroke="#dad8d5"/><rect x="921.5" y="368.500" width="13" height="13" fill="#6b2394" stroke="#dad8d5"/><rect x="937.5" y="368.500" width="13" height="13" fill="#6b0094" stroke="#dad8d5"/><rect x="953.5" y="368.500" width="13" height="13" fill="#5e11a6" stroke="#dad8d5"/><rect x="969.5" y="368.500" width="13" height="13" fill="#280099" stroke="#dad8d5"/><rect x="985.5" y="368.500" width="13" height="13" fill="#4700b8" stroke="#dad8d5"/><rect x="201.5" y="384.500" width="13" height="13" fill="#2300dc" stroke="#dad8d5"/><rect x="217.5" y="384.500" width="13" height="13" fill="#2323dc" stroke="#dad8d5"/><rect x="233.5" y="384.500" width="13" height="13" fill="#0047ff" stroke="#dad8d5"/><rect x="249.5" y="384.500" width="13" height="13" fill="#0099ff" stroke="#dad8d5"/><rect x="265.5" y="384.500" width="13" height="13" fill="#00b8ff" stroke="#dad8d5"/><rect x="281.5" y="384.500" width="13" height="13" fill="#99ccff" stroke="#dad8d5"/><rect x="297.5" y="384.500" width="13" height="13" fill="#cfe7f5" stroke="#dad8d5"/><rect x="313.5" y="384.500" width="13" height="13" fill="#00dcff" stroke="#dad8d5"/><rect x="329.5" y="384.500" width="13" height="13" fill="#00cccc" stroke="#dad8d5"/><rect x="345.5" y="384.500" width="13" height="13" fill="#23b8dc" stroke="#dad8d5"/><rect x="361.5" y="384.500" width="13" height="13" fill="#47b8b8" stroke="#dad8d5"/><rect x="377.5" y="384.500" width="13" height="13" fill="#33a3a3" stroke="#dad8d5"/><rect x="393.5" y="384.500" width="13" height="13" fill="#198a8a" stroke="#dad8d5"/><rect x="409.5" y="384.500" width="13" height="13" fill="#006b6b" stroke="#dad8d5"/><rect x="425.5" y="384.500" width="13" height="13" fill="#004a4a" stroke="#dad8d5"/><rect x="441.5" y="384.500" width="13" height="13" fill="#355e00" stroke="#dad8d5"/><rect x="457.5" y="384.500" width="13" height="13" fill="#5c8526" stroke="#dad8d5"/><rect x="473.5" y="384.500" width="13" height="13" fill="#7da647" stroke="#dad8d5"/><rect x="489.5" y="384.500" width="13" height="13" fill="#94bd5e" stroke="#dad8d5"/><rect x="505.5" y="384.500" width="13" height="13" fill="#00ae00" stroke="#dad8d5"/><rect x="521.5" y="384.500" width="13" height="13" fill="#33cc66" stroke="#dad8d5"/><rect x="537.5" y="384.500" width="13" height="13" fill="#3deb3d" stroke="#dad8d5"/><rect x="553.5" y="384.500" width="13" height="13" fill="#23ff23" stroke="#dad8d5"/><rect x="569.5" y="384.500" width="13" height="13" fill="#e6ff00" stroke="#dad8d5"/><rect x="585.5" y="384.500" width="13" height="13" fill="#ffff99" stroke="#dad8d5"/><rect x="601.5" y="384.500" width="13" height="13" fill="#ffff66" stroke="#dad8d5"/><rect x="617.5" y="384.500" width="13" height="13" fill="#e6e64c" stroke="#dad8d5"/><rect x="633.5" y="384.500" width="13" height="13" fill="#cccc00" stroke="#dad8d5"/><rect x="649.5" y="384.500" width="13" height="13" fill="#b3b300" stroke="#dad8d5"/><rect x="665.5" y="384.500" width="13" height="13" fill="#808019" stroke="#dad8d5"/><rect x="681.5" y="384.500" width="13" height="13" fill="#666600" stroke="#dad8d5"/><rect x="697.5" y="384.500" width="13" height="13" fill="#4c1900" stroke="#dad8d5"/><rect x="713.5" y="384.500" width="13" height="13" fill="#663300" stroke="#dad8d5"/><rect x="729.5" y="384.500" width="13" height="13" fill="#804c19" stroke="#dad8d5"/><rect x="745.5" y="384.500" width="13" height="13" fill="#996633" stroke="#dad8d5"/><rect x="761.5" y="384.500" width="13" height="13" fill="#cc6633" stroke="#dad8d5"/><rect x="777.5" y="384.500" width="13" height="13" fill="#ff6633" stroke="#dad8d5"/><rect x="793.5" y="384.500" width="13" height="13" fill="#ff9966" stroke="#dad8d5"/><rect x="809.5" y="384.500" width="13" height="13" fill="#ffcc99" stroke="#dad8d5"/><rect x="825.5" y="384.500" width="13" height="13" fill="#9999ff" stroke="#dad8d5"/><rect x="841.5" y="384.500" width="13" height="13" fill="#993366" stroke="#dad8d5"/><rect x="857.5" y="384.500" width="13" height="13" fill="#ffffcc" stroke="#dad8d5"/><rect x="873.5" y="384.500" width="13" height="13" fill="#ccffff" stroke="#dad8d5"/><rect x="889.5" y="384.500" width="13" height="13" fill="#660066" stroke="#dad8d5"/><rect x="905.5" y="384.500" width="13" height="13" fill="#ff8080" stroke="#dad8d5"/><rect x="921.5" y="384.500" width="13" height="13" fill="#0066cc" stroke="#dad8d5"/><rect x="937.5" y="384.500" width="13" height="13" fill="#004586" stroke="#dad8d5"/><rect x="953.5" y="384.500" width="13" height="13" fill="#ff420e" stroke="#dad8d5"/><rect x="969.5" y="384.500" width="13" height="13" fill="#ffd320" stroke="#dad8d5"/><rect x="985.5" y="384.500" width="13" height="13" fill="#579d1c" stroke="#dad8d5"/></svg>
<div class="a" style="left:1010px;top:362px;width:10px;height:42px;background:#e6e4e1;border:1px solid #b7b4b0;border-radius:4px"></div>
<div class="a" style="left:1010px;top:375px;width:10px;height:17px;background:#fbfbfa;border:1px solid #aba8a4;border-radius:4px"></div>
<svg style="left:1012px;top:367.5px" width="5" height="4" viewBox="0 0 5 4"><path d="M0 4l2.500-4 2.500 4z" fill="#666"/></svg>
<svg style="left:1012px;top:396.5px" width="5" height="4" viewBox="0 0 5 4"><path d="M0 0l2.500 4 2.500-4z" fill="#666"/></svg>
<div class="a" style="left:1013px;top:381px;width:4px;height:1px;background:#888"></div>
<div class="a" style="left:1013px;top:383px;width:4px;height:1px;background:#888"></div>
<div class="a" style="left:1013px;top:385px;width:4px;height:1px;background:#888"></div>
<div class="a" style="left:0px;top:407px;width:1017px;height:1px;background:#b5b3b0"></div>
<div class="a" style="left:0px;top:408px;width:1017px;height:1px;background:#fbfaf9"></div>
<div class="a" style="left:0px;top:426px;width:2px;height:1px;background:#c8c5c0"></div>
<div class="a" style="left:0px;top:429px;width:2px;height:1px;background:#c8c5c0"></div>
<div class="a" style="left:0px;top:432px;width:2px;height:1px;background:#c8c5c0"></div>
<div class="sep" style="left:45px;top:416px;height:24px;background:#d6d3cf"></div>
<div class="sep" style="left:218px;top:416px;height:24px;background:#d6d3cf"></div>
<div class="sep" style="left:676px;top:416px;height:24px;background:#d6d3cf"></div>
<div class="sep" style="left:750px;top:416px;height:24px;background:#d6d3cf"></div>
<div class="pressed" style="left:10px;top:412px;width:31px;height:33px"></div>
<svg style="left:18px;top:417px" width="14" height="22" viewBox="0 0 14 22"><path d="M1.500 1v16.500l4-3.800 2.800 6.300 2.600-1.200-2.800-6 5.400-.3z" fill="#fff" stroke="#000" stroke-width="1.300" stroke-linejoin="round"/></svg>
<svg style="left:57px;top:417px" width="19" height="19" viewBox="0 0 19 19"><path d="M0.500 18L18 0.700" stroke="#222" stroke-width="1.300"/></svg>
<svg style="left:89px;top:423px" width="20" height="9" viewBox="0 0 20 9"><path d="M0 4.500h14" stroke="#000" stroke-width="1.200"/><path d="M19.700 4.500l-7.200-2.700v5.400z" fill="#000"/></svg>
<svg style="left:121px;top:420px" width="20" height="15" viewBox="0 0 20 15"><defs><linearGradient id="gr" x1="0.2" y1="0" x2="0.8" y2="1"><stop offset="0" stop-color="#b4b4b4"/><stop offset="1" stop-color="#efefef"/></linearGradient></defs><rect x="0.500" y="0.500" width="19" height="14" fill="url(#gr)" stroke="#333" stroke-width="1"/><rect x="1.500" y="1.500" width="17" height="12" fill="none" stroke="#fafafa" stroke-width="1"/></svg>
<svg style="left:153.5px;top:419.5px" width="22" height="15.5" viewBox="0 0 22 15.5"><ellipse cx="10.900" cy="7.800" rx="10.200" ry="7.100" fill="url(#gr)" stroke="#222" stroke-width="1"/></svg>
<div class="t" style="left:190.8px;top:416px;font-size:22px;font-family:'Liberation Serif',serif;font-weight:bold;color:#1a1208">T</div>
<svg style="left:225.5px;top:415.5px" width="25" height="22" viewBox="0 0 25 22">
<defs><linearGradient id="gb" x1="0" y1="0" x2="0" y2="1"><stop offset="0" stop-color="#6a8fc2"/><stop offset="1" stop-color="#e4ebf4"/></linearGradient></defs>
<path d="M0.500 2.500c5 1.500 7.500 4 7.500 8.500s-1 8 4.500 9.500H0.500z" fill="url(#gb)"/>
<path d="M0.500 2.500c5 1.500 7.500 4 7.500 8.500s-1 8 3 9.500q1.500.4 2.500-.8" fill="none" stroke="#111" stroke-width="1.200"/>
<path d="M12 19.500l.8-4.500L20.500 2q2.500-1.800 4 1L17 16.300z" fill="#f0c23c" stroke="#2a1a08" stroke-width="1"/>
<path d="M20.500 2q2.500-1.800 4 1l-1.500 2.600-4-2z" fill="#d8443a" stroke="#2a1a08" stroke-width=".6"/>
<path d="M14 12.500l3 1.800" stroke="#e8e0d0" stroke-width="1"/>
<path d="M12 19.500l.7-3.800 2.800 1.600z" fill="#222"/>
</svg>
<svg style="left:260.8px;top:426px" width="6" height="4" viewBox="0 0 6 4"><path d="M0 0h5.600l-2.800 3.300z" fill="#000"/></svg>
<svg style="left:279px;top:417px" width="19" height="20" viewBox="0 0 19 20"><path d="M3.500 3.400H8v13.800h6" fill="none" stroke="#111" stroke-width="1.300"/><rect x="0.600" y="1.600" width="3.600" height="3.600" rx="1" fill="#fff" stroke="#111" stroke-width="1.100"/><rect x="13.800" y="15.400" width="3.600" height="3.600" rx="1" fill="#fff" stroke="#111" stroke-width="1.100"/></svg>
<svg style="left:310.7px;top:426px" width="6" height="4" viewBox="0 0 6 4"><path d="M0 0h5.600l-2.800 3.300z" fill="#000"/></svg>
<svg style="left:327.7px;top:423px" width="20" height="9" viewBox="0 0 20 9"><path d="M0 4.500h14" stroke="#000" stroke-width="1.200"/><path d="M19.700 4.500l-7.200-2.700v5.400z" fill="#000"/></svg>
<svg style="left:360.7px;top:426px" width="6" height="4" viewBox="0 0 6 4"><path d="M0 0h5.600l-2.800 3.300z" fill="#000"/></svg>
<svg style="left:377px;top:417.5px" width="23" height="22" viewBox="0 0 23 22"><path d="M11.300 0.600L22 10.800 11.300 21 0.600 10.800z" fill="url(#gr)" stroke="#444" stroke-width="1"/></svg>
<svg style="left:410.9px;top:426px" width="6" height="4" viewBox="0 0 6 4"><path d="M0 0h5.600l-2.800 3.300z" fill="#000"/></svg>
<svg style="left:426px;top:416.5px" width="24" height="23" viewBox="0 0 24 23"><circle cx="11.800" cy="11.600" r="10.500" fill="url(#gr)" stroke="#444" stroke-width="1.100"/><circle cx="8.600" cy="8.300" r="1.100" fill="#fafafa"/><circle cx="15.200" cy="8.300" r="1.100" fill="#fafafa"/><path d="M5.500 13q6.300 6 12.600 0" fill="none" stroke="#fafafa" stroke-width="1.200"/></svg>
<svg style="left:461px;top:426px" width="6" height="4" viewBox="0 0 6 4"><path d="M0 0h5.600l-2.800 3.300z" fill="#000"/></svg>
<svg style="left:475.5px;top:420.5px" width="24" height="15" viewBox="0 0 24 15"><path d="M0.700 7.300L7.500 0.700V4h8.500V0.700L23 7.300 16 13.900V10.600H7.500v3.300z" fill="url(#gr)" stroke="#333" stroke-width="1.100" stroke-linejoin="round"/></svg>
<svg style="left:511.2px;top:426px" width="6" height="4" viewBox="0 0 6 4"><path d="M0 0h5.600l-2.800 3.300z" fill="#000"/></svg>
<svg style="left:526.5px;top:417px" width="23" height="22" viewBox="0 0 23 22"><rect x="0.600" y="0.600" width="21.600" height="20.800" fill="url(#gr)" stroke="#222" stroke-width="1.200"/><path d="M6.500 1.500v19.500M1.500 6.500h20" stroke="#e6e6e6" stroke-width="1"/></svg>
<svg style="left:560.7px;top:426px" width="6" height="4" viewBox="0 0 6 4"><path d="M0 0h5.600l-2.800 3.300z" fill="#000"/></svg>
<svg style="left:575.5px;top:417px" width="24" height="22" viewBox="0 0 24 22"><path d="M3.500 0.700h16.500q2.800 0 2.800 2.800v9q0 2.800-2.800 2.800H9.800L1.500 21.300l3.500-6H3.500q-2.800 0-2.800-2.800v-9q0-2.800 2.800-2.800z" fill="url(#gr)" stroke="#333" stroke-width="1.100" stroke-linejoin="round"/></svg>
<svg style="left:611.6px;top:426px" width="6" height="4" viewBox="0 0 6 4"><path d="M0 0h5.600l-2.800 3.300z" fill="#000"/></svg>
<svg style="left:626px;top:416.5px" width="24" height="23" viewBox="0 0 24 23"><path d="M11.5 0.7L14.2 8.6L22.5 8.7L15.9 13.7L18.3 21.7L11.5 16.9L4.7 21.7L7.1 13.7L0.5 8.7L8.8 8.6z" fill="url(#gr)" stroke="#333" stroke-width="1" stroke-linejoin="miter"/></svg>
<svg style="left:661px;top:426px" width="6" height="4" viewBox="0 0 6 4"><path d="M0 0h5.600l-2.800 3.300z" fill="#000"/></svg>
<svg style="left:684px;top:415px" width="24" height="24" viewBox="0 0 24 24"><path d="M4.5 4.4L14.5 2.3L21.5 9.5L18.3 22.5L2.4 20.4L8.5 14.6z" fill="none" stroke="#000" stroke-width="1.200"/><rect x="3.3" y="3.2" width="2.400" height="2.400" fill="#fff" stroke="#000" stroke-width="1"/><rect x="13.3" y="1.1" width="2.400" height="2.400" fill="#fff" stroke="#000" stroke-width="1"/><rect x="20.3" y="8.3" width="2.400" height="2.400" fill="#fff" stroke="#000" stroke-width="1"/><rect x="17.1" y="21.3" width="2.400" height="2.400" fill="#fff" stroke="#000" stroke-width="1"/><rect x="1.2" y="19.2" width="2.400" height="2.400" fill="#fff" stroke="#000" stroke-width="1"/><rect x="7.3" y="13.4" width="2.400" height="2.400" fill="#fff" stroke="#000" stroke-width="1"/></svg>
<svg style="left:720px;top:415px" width="24" height="25" viewBox="0 0 24 25">
<g transform="translate(3.600,19.300) rotate(-46.500) scale(0.86)">
<path d="M0 -0.900L4 -2.600 9 -4.600 17 -4.200 21.500 -5.600V5.600L17 4.200 9 4.600 4 2.600 0 0.900z" fill="#c9962e" stroke="#1a1206" stroke-width="1.100" stroke-linejoin="round"/>
<path d="M0 -0.900L4 -2.600 9 -4.600V4.600L4 2.600 0 0.900z" fill="#d9d9d6" stroke="#1a1206" stroke-width="1"/>
<path d="M9 -4.600h2.200V4.600H9z" fill="#d8241c"/>
<path d="M12 -3.500L17 -3.300V-1L12 -1.500z" fill="#f0d890" opacity=".8"/>
<ellipse cx="22" cy="0" rx="1.900" ry="6.200" fill="#e9bd4a" stroke="#1a1206" stroke-width="1.100"/>
</g>
<circle cx="3.200" cy="22.600" r="1.900" fill="#2f6fc0" stroke="#1d3f7a" stroke-width=".6"/>
</svg>
<svg style="left:761px;top:416px" width="20" height="22" viewBox="0 0 20 22"><circle cx="10" cy="2.300" r="1.600" fill="#e8e8e8" stroke="#888" stroke-width=".8"/><path d="M7 5l3-2.500 3 2.500" fill="none" stroke="#999" stroke-width=".8"/><rect x="0.800" y="5.300" width="18.400" height="15.700" rx="1" fill="#e3e2e0" stroke="#7a5836" stroke-width="1.600"/><rect x="2.500" y="7" width="15" height="12.300" fill="none" stroke="#f6f6f4" stroke-width=".8"/><text x="10" y="18" font-size="11.500" font-weight="bold" text-anchor="middle" fill="#111" font-family="Liberation Sans, sans-serif">A</text></svg>
<svg style="left:792px;top:416px" width="23" height="22" viewBox="0 0 23 22"><rect x="0.800" y="0.800" width="21.600" height="20.700" fill="none" stroke="#222" stroke-width="1" stroke-dasharray="1 1.480"/><rect x="0" y="0" width="1.800" height="1.800" fill="#000"/><rect x="21.400" y="0" width="1.800" height="1.800" fill="#000"/><rect x="0" y="20.500" width="1.800" height="1.800" fill="#000"/><rect x="21.400" y="20.500" width="1.800" height="1.800" fill="#000"/><circle cx="15.800" cy="7.400" r="4.700" fill="#f0d878" stroke="#111" stroke-width="1.100"/><rect x="2.300" y="7.400" width="9.700" height="9.800" rx="1" fill="#e8401c" stroke="#111" stroke-width="1.200"/><path d="M14.700 8.500l4.800 10.500H9.200z" fill="#6d94c8" stroke="#111" stroke-width="1.100" stroke-linejoin="round"/></svg>
<svg style="left:826px;top:417px" width="21" height="19" viewBox="0 0 21 19"><rect x="0.500" y="0.500" width="15" height="14" rx="1.200" fill="#fafafa" stroke="#a9a8a5" stroke-width="1"/><rect x="2.500" y="3" width="11" height="8" fill="#3b6fc4"/><rect x="5.500" y="3.800" width="15" height="14" rx="1.200" fill="#fafafa" stroke="#a9a8a5" stroke-width="1"/><rect x="7.500" y="6.500" width="11" height="8" fill="#2f63c0"/><path d="M7.500 14.500v-2q3-2.500 6 0l2-1 3 1.500v1.500z" fill="#f3d437"/><path d="M14 12l1.500-4M15 9.500l2-1.500" stroke="#123" stroke-width=".8"/></svg>
<div class="sep" style="left:858px;top:416px;height:24px;background:#d6d3cf"></div>
<div class="a" style="left:892px;top:412px;width:19px;height:33px;background:linear-gradient(#f6f5f4,#e9e7e5);border:1px solid #c2bfbb;border-radius:0 3px 3px 0"></div>
<div class="pressed" style="left:863px;top:412px;width:30px;height:33px;background:linear-gradient(#d9d7d4,#e6e4e2)"></div>
<svg style="left:867px;top:418px" width="20" height="20" viewBox="0 0 20 20"><path d="M5 1H19.300C19 11 12 18.500 0.800 19.200V7Q4.800 6 5 1z" fill="#6d94c8" stroke="#26344a" stroke-width="1.300" stroke-linejoin="round"/></svg>
<svg style="left:917px;top:418px" width="18" height="20" viewBox="0 0 18 20"><rect x="0" y="0" width="2" height="20" fill="#111"/><rect x="3.700" y="1.600" width="10" height="4" fill="#8fb0d8" stroke="#2f4f80" stroke-width="1"/><rect x="3.700" y="7.700" width="13" height="4" fill="#a8c878" stroke="#4f6f28" stroke-width="1"/><rect x="3.700" y="13.600" width="8" height="4" fill="#8fb0d8" stroke="#2f4f80" stroke-width="1"/></svg>
<svg style="left:950px;top:426px" width="6" height="4" viewBox="0 0 6 4"><path d="M0 0h5.600l-2.800 3.300z" fill="#000"/></svg>
<svg style="left:1011px;top:426px" width="8" height="6" viewBox="0 0 8 6"><path d="M0.500 0.500L3.500 3 0.500 5.500M4.500 0.500L7.500 3 4.500 5.500" fill="none" stroke="#111" stroke-width="1.500"/></svg>
<div class="a" style="left:0px;top:448px;width:1017px;height:1px;background:#dbdad8"></div>
<div class="a" style="left:0px;top:449px;width:1017px;height:1px;background:#fbfaf9"></div>
<div class="t" style="left:5px;top:455px;font-size:13px;color:#3c3b37;-webkit-text-stroke:.2px #3c3b37;letter-spacing:-0.32px">Выбран объект групповой объект</div>
<div class="sep" style="left:311px;top:453px;height:16px;background:#b5b3b0"></div>
<div class="sep" style="left:533px;top:453px;height:16px;background:#b5b3b0"></div>
<div class="sep" style="left:559px;top:453px;height:16px;background:#b5b3b0"></div>
<div class="sep" style="left:588px;top:453px;height:16px;background:#b5b3b0"></div>
<div class="sep" style="left:728px;top:453px;height:16px;background:#b5b3b0"></div>
<div class="sep" style="left:837px;top:453px;height:16px;background:#b5b3b0"></div>
<div class="sep" style="left:980px;top:453px;height:16px;background:#b5b3b0"></div>
<svg style="left:319px;top:455px" width="15" height="11" viewBox="0 0 15 11"><path d="M3.700 0.200v9.500M0 4.600h7.400" stroke="#1a1ae6" stroke-width="1"/><rect x="3.700" y="4.600" width="10" height="5.900" fill="none" stroke="#111" stroke-width="1" stroke-dasharray="1 1"/></svg>
<div class="t" style="left:340px;top:455px;font-size:13px;color:#3c3b37;-webkit-text-stroke:.2px #3c3b37;letter-spacing:-0.37px">20,46 / 2,70</div>
<svg style="left:426px;top:455px" width="15" height="11" viewBox="0 0 15 11"><rect x="5.500" y="3.800" width="8.500" height="6.700" fill="none" stroke="#111" stroke-width="1" stroke-dasharray="1 1"/><path d="M6 0.300l2 2M8 0.300l-2 2M11.500 0.300l2 2M13.500 0.300l-2 2" stroke="#111" stroke-width=".8"/><path d="M1 3.800v7" stroke="#111" stroke-width="1.400" stroke-dasharray="1.300 1.500"/></svg>
<div class="t" style="left:447px;top:455px;font-size:13px;color:#3c3b37;-webkit-text-stroke:.2px #3c3b37;letter-spacing:-0.47px">5,65 x 2,00</div>
<svg style="left:539px;top:456px" width="11" height="12" viewBox="0 0 11 12"><path d="M0.500 0.500h7l3 3v8h-10z" fill="#fff" stroke="#888" stroke-width="1"/><path d="M5.500 4v5M3 6.500h5M3.700 4.700l3.600 3.600M7.300 4.700l-3.600 3.600" stroke="#e8541c" stroke-width="1"/></svg>
<div class="t" style="left:594px;top:455px;font-size:13px;color:#3c3b37;-webkit-text-stroke:.2px #3c3b37;letter-spacing:-0.5px">Слайд 1 / 1 (Разметка)</div>
<div class="t" style="left:733px;top:455px;font-size:13px;color:#3c3b37;-webkit-text-stroke:.2px #3c3b37;letter-spacing:-0.45px">Обычный</div>
<svg style="left:842.5px;top:456px" width="12" height="12" viewBox="0 0 12 12"><circle cx="6" cy="6" r="5" fill="#d5e2f3" stroke="#6a86b4" stroke-width="1"/><path d="M3.500 6h5" stroke="#1a4a9a" stroke-width="1.500"/></svg>
<div class="a" style="left:859px;top:461px;width:96px;height:1px;background:#a5a3a0"></div>
<div class="a" style="left:906px;top:456px;width:1px;height:12px;background:repeating-linear-gradient(#8a8885 0 2px,#c9c7c4 2px 3px)"></div>
<svg style="left:885.5px;top:457.5px" width="9" height="9" viewBox="0 0 9 9"><circle cx="4.500" cy="4.500" r="3.700" fill="#6288bc" stroke="#34507c" stroke-width="1"/></svg>
<svg style="left:960.5px;top:456px" width="12" height="12" viewBox="0 0 12 12"><circle cx="6" cy="6" r="5" fill="#d5e2f3" stroke="#6a86b4" stroke-width="1"/><path d="M3.500 6h5M6 3.500v5" stroke="#1a4a9a" stroke-width="1.500"/></svg>
<div class="t" style="left:989.5px;top:455px;font-size:13px;color:#3c3b37;-webkit-text-stroke:.2px #3c3b37;letter-spacing:-0.9px">67%</div>
<svg style="left:844px;top:396px" width="61" height="62" viewBox="0 0 61 62"><ellipse cx="30.300" cy="30.500" rx="26.900" ry="27.400" fill="none" stroke="#f41fd6" stroke-width="6.400"/></svg>
<div class="a" style="left:903px;top:425px;width:2px;height:2px;background:#222"></div>
<svg style="left:903px;top:436px" width="13" height="20" viewBox="0 0 13 20"><path d="M1 1.500v14l3.300-3 2.500 5.600 2.500-1.100-2.500-5.500 4.700-.2z" fill="#fff" stroke="#000" stroke-width="1.300" stroke-linejoin="round"/></svg>
</body></html>
